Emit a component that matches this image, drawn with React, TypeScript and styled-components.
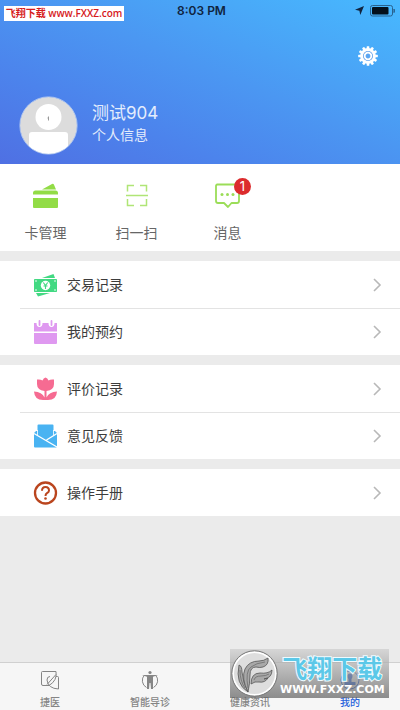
import React from 'react';
import styled, { createGlobalStyle } from 'styled-components';

const sans = '"Inter", "Noto Sans CJK SC", sans-serif';

const GlobalStyle = createGlobalStyle`
  *, *::before, *::after { box-sizing: border-box; }
  body { margin: 0; background: #ebebeb; font-family: ${sans}; }
  button { border: 0; padding: 0; background: none; font: inherit; color: inherit; cursor: pointer; }
  svg { display: block; flex: none; }
`;

const Page = styled.div`
  min-height: 100vh;
  display: flex;
  flex-direction: column;
`;

const Header = styled.header`
  height: 164px;
  display: flex;
  flex-direction: column;
  background: linear-gradient(to top right, #4f70e3 0%, #4c83ec 28%, #4b97f2 55%, #49a9f8 78%, #47b9ff 100%);
`;

const StatusBar = styled.div`
  display: grid;
  grid-template-columns: 1fr auto 1fr;
  align-items: center;
  height: 20px;
  padding: 0 5px 0 4px;
  color: #10243f;
`;

const SiteTag = styled.span`
  justify-self: start;
  width: 120px;
  height: 15px;
  margin-top: 6px;
  background: #fff;
  color: #d61a1c;
  font: 600 10px/15px "Open Sans", "Noto Sans CJK SC", sans-serif;
  text-align: center;
  white-space: nowrap;
`;

const Clock = styled.time`
  margin-left: 4px;
  font-size: 12px;
  font-weight: 600;
  line-height: 20px;
`;

const StatusIcons = styled.div`
  justify-self: end;
  display: flex;
  align-items: center;
  gap: 6px;
`;

const SettingsButton = styled.button`
  align-self: flex-end;
  margin: 25px 22px 0 0;
`;

const Profile = styled.button`
  display: flex;
  align-items: center;
  gap: 14px;
  margin: 29px 19px 0;
  text-align: left;
`;

const ProfileText = styled.span`
  display: flex;
  flex-direction: column;
  padding-bottom: 4px;
  color: #e4edfc;
`;

const Name = styled.span`
  font-size: 17px;
  line-height: 23px;
`;

const Caption = styled.span`
  font-size: 14px;
  line-height: 20px;
`;

const QuickActions = styled.nav`
  display: flex;
  height: 87px;
  background: #fff;
`;

const QuickAction = styled.button`
  width: 91px;
  display: flex;
  flex-direction: column;
  align-items: center;
  padding-top: 17px;
  gap: 12px;
  color: #666;
  font-size: 14px;
  line-height: 20px;
`;

const IconHolder = styled.span`
  position: relative;
  display: block;
`;

const Badge = styled.span`
  position: absolute;
  top: -3px;
  right: -10px;
  width: 17px;
  height: 17px;
  border-radius: 50%;
  background: #dc2b2d;
  color: #fff;
  font-size: 13px;
  line-height: 17px;
  text-align: center;
`;

const Group = styled.section`
  margin-top: 10px;
  background: #fff;
`;

const Row = styled.button`
  width: 100%;
  height: 47px;
  display: flex;
  align-items: center;
  padding: 0 18px 0 33px;
  background: linear-gradient(#e3e3e3, #e3e3e3) 20px 0 / 100% 1px no-repeat;
  color: #3c3c3c;
  font-size: 14px;
  line-height: 20px;

  &:first-child { background: none; }
`;

const RowLabel = styled.span`
  flex: 1;
  margin-left: 9px;
  text-align: left;
`;

const TabBar = styled.nav`
  position: relative;
  display: grid;
  grid-template-columns: repeat(4, 1fr);
  height: 48px;
  margin-top: auto;
  border-top: 1px solid #d0d0d0;
  background: #f6f6f6;
`;

const Tab = styled.button<{ $active?: boolean }>`
  display: flex;
  flex-direction: column;
  align-items: center;
  padding-top: 7px;
  gap: 5px;
  color: ${({ $active }) => ($active ? '#2862dc' : '#858585')};
  font-size: 10px;
  font-weight: 500;
  line-height: 14px;
`;

const Watermark = styled.aside`
  position: absolute;
  right: 11px;
  bottom: 12px;
  width: 159px;
  height: 49px;
  display: flex;
  align-items: center;
  gap: 2px;
  padding-left: 1px;
  background: linear-gradient(rgba(205, 205, 205, 0.7), rgba(95, 95, 95, 0.7));
  pointer-events: none;
`;

const WatermarkText = styled.div`
  display: flex;
  flex-direction: column;
  align-items: center;
  white-space: nowrap;
`;

const WatermarkName = styled.strong`
  color: #5cc8e8;
  font: 700 25px/32px "Noto Sans CJK SC", sans-serif;
  paint-order: stroke;
  -webkit-text-stroke: 2px #effbff;
`;

const WatermarkUrl = styled.span`
  color: #fff;
  font: 700 11px/14px "DejaVu Sans", sans-serif;
`;

const LocationIcon = () => (
  <svg width="9" height="9" viewBox="0 0 9 9" aria-hidden="true">
    <path d="M9 0 5.3 9 4.4 4.7 0 3.8Z" fill="#10243f" />
  </svg>
);

const BatteryIcon = () => (
  <svg width="25" height="12" viewBox="0 0 25 12" aria-hidden="true">
    <rect x=".5" y=".5" width="22" height="10.5" rx="2" fill="none" stroke="#28628f" />
    <rect x="2" y="2" width="16.5" height="7.5" rx="1" fill="#03101c" />
    <path d="M24 4q1 1.800 0 3.600Z" fill="#28628f" stroke="#28628f" />
  </svg>
);

const GearIcon = () => (
  <svg width="20" height="22" viewBox="-10 -11 20 22" aria-hidden="true">
    <g fill="#fff">
      {Array.from({ length: 12 }, (_, i) => (
        <rect key={i} x="-1.3" y="-9.8" width="2.6" height="4" rx=".5" transform={`rotate(${i * 30})`} />
      ))}
    </g>
    <circle r="6.2" fill="none" stroke="#fff" strokeWidth="3.4" />
    <circle r="5" fill="#6aa6ec" />
    <circle r="3.3" fill="#5ba6f2" stroke="#fff" strokeWidth="1.8" />
  </svg>
);

const Avatar = () => (
  <svg width="59" height="59" viewBox="0 0 59 59" role="img" aria-label="头像">
    <defs>
      <clipPath id="avatar"><circle cx="29.5" cy="29.5" r="28.5" /></clipPath>
    </defs>
    <circle cx="29.5" cy="29.5" r="28.5" fill="#dcdcdc" />
    <g clipPath="url(#avatar)" fill="#fff">
      <circle cx="29.5" cy="21" r="13" />
      <path d="M10 39q0-3 3-3h33q3 0 3 3v21H10Z" />
    </g>
    <path d="M29.500 20.500v4M28.500 22h1" stroke="#999" fill="none" />
    <circle cx="29.500" cy="29.500" r="28.700" fill="none" stroke="#b8cdf1" strokeWidth=".8" />
  </svg>
);

const CardIcon = () => (
  <svg width="27" height="30" viewBox="0 0 27 30" fill="#92dc46" aria-hidden="true">
    <path d="M10 8.500 20 3q1.500-.5 2 .8L24 8.500Z" />
    <path d="M1 12q0-2.500 2.500-2.500h20q2.500 0 2.500 2.500v1.500H1ZM1 17h25v9q0 1-1 1H2q-1 0-1-1Z" />
  </svg>
);

const ScanIcon = () => (
  <svg width="24" height="30" viewBox="0 0 24 30" fill="none" stroke="#b0e576" strokeWidth="1.500" aria-hidden="true">
    <path d="M9 4.500H2.500v6M15 4.500h6.500v6M1 14.500h22M2.500 18v6.500H9M21.500 18v6.500H15" />
  </svg>
);

const MessageIcon = () => (
  <svg width="27" height="30" viewBox="0 0 27 30" aria-hidden="true">
    <path d="M3 3.500h20.500q1.500 0 1.500 1.500v15q0 2-2 2h-5.500L14 26l-4-4H4q-2 0-2-2V5q0-1.500 1.500-1.500Z" fill="none" stroke="#9bdd58" strokeWidth="1.800" strokeLinejoin="round" />
    <g fill="#9bdd58"><circle cx="8" cy="13.500" r="1.500" /><circle cx="13.500" cy="13.500" r="1.500" /><circle cx="19" cy="13.500" r="1.500" /></g>
  </svg>
);

const MoneyIcon = () => (
  <svg width="25" height="24" viewBox="0 0 25 24" aria-hidden="true">
    <path d="M9 5 20.500 1l1.500 4ZM3 20h14L5 23.500Z" fill="#42d982" />
    <rect x="1" y="6" width="23" height="13" rx=".7" fill="#42d982" />
    <g fill="#fff">
      <circle cx="12.500" cy="12.500" r="4.700" />
      <circle cx="3" cy="8" r=".8" /><circle cx="22" cy="8" r=".8" /><circle cx="3" cy="17" r=".8" /><circle cx="22" cy="17" r=".8" />
    </g>
    <path d="m10.300 9.500 2.200 3 2.200-3M12.500 12.500v3.500M10.500 13h4" fill="none" stroke="#42d982" strokeWidth="1.100" />
  </svg>
);

const CalendarIcon = () => (
  <svg width="25" height="26" viewBox="0 0 25 26" aria-hidden="true">
    <path d="M1 4h2.500q0 4 3 4t3-4h6q0 4 3 4t3-4H24v8.500H1ZM1 14h23v10q0 1-1 1H2q-1 0-1-1Z" fill="#df99f0" />
    <path d="M6.500 2v4M18.500 2v4" stroke="#df99f0" strokeWidth="1.800" strokeLinecap="round" />
  </svg>
);

const TulipIcon = () => (
  <svg width="25" height="24" viewBox="0 0 25 24" fill="#f66b92" aria-hidden="true">
    <path d="M4 2.500q3.500-.5 5.500 1 1-2.500 3-3 2 .5 3 3 2-1.500 5.500-1V7q0 6-7.500 7v6.500q2.500-5.500 10.500-6-.5 8.500-9 8.500h-5q-8.500 0-9-8.500 8 .5 10.500 6V14Q4 13 4 7Z" />
  </svg>
);

const EnvelopeIcon = () => (
  <svg width="25" height="24" viewBox="0 0 25 24" aria-hidden="true">
    <path d="M5.500.500h14q1 0 1 1V7H24v15.500q0 1-1 1H2q-1 0-1-1V7h3.500V1.500q0-1 1-1Z" fill="#49b3f2" />
    <path d="M1 9.500 24 23M13.500 16 24 9.500" fill="none" stroke="#fff" strokeWidth="1.400" />
    <path d="M4.500 6v5.500M20.500 6v5.500" stroke="#fff" strokeWidth=".8" />
    <path d="M1 6v3l3-3ZM24 6v3l-3-3Z" fill="#fff" />
  </svg>
);

const HelpIcon = () => (
  <svg width="25" height="24" viewBox="0 0 25 24" fill="none" stroke="#ba451e" aria-hidden="true">
    <circle cx="12.500" cy="12" r="10.500" strokeWidth="2.300" />
    <path d="M9 9.800q0-3.800 3.500-3.800t3.500 3.500q0 1.500-2 2.700-1.500 1-1.500 2.800" strokeWidth="2" />
    <circle cx="12.500" cy="17.500" r="1.300" fill="#ba451e" stroke="none" />
  </svg>
);

const Chevron = () => (
  <svg width="10" height="14" viewBox="0 0 10 14" fill="none" stroke="#b8b8b8" strokeWidth="1.600" aria-hidden="true">
    <path d="m2 1 6 6-6 6" />
  </svg>
);

const HospitalIcon = () => (
  <svg width="20" height="20" viewBox="0 0 20 20" fill="none" stroke="currentColor" strokeWidth="1" aria-hidden="true">
    <path d="M2.500 1.500H16q1.500 9-7 14H3q-1.500 0-1.500-1.500V2.500q0-1 1-1Z" />
    <path d="M16 6.500h1.500q1 0 1 1V19Q8 18.500 7 10q0-3.500 3-3.500M7 14.500l9-10" />
  </svg>
);

const BodyIcon = () => (
  <svg width="20" height="20" viewBox="0 0 20 20" aria-hidden="true">
    <path d="M4.500 5a8 8 0 0 0 2 12.500M15.500 5a8 8 0 0 1-2 12.500" fill="none" stroke="currentColor" />
    <circle cx="10" cy="2.500" r="1.600" fill="currentColor" />
    <path d="M2 5h16l-5 1.800V19h-2l-.5-6h-1L9 19H7V6.800Z" fill="currentColor" />
  </svg>
);

const NewsIcon = () => (
  <svg width="20" height="20" viewBox="0 0 20 20" fill="none" stroke="currentColor" aria-hidden="true">
    <rect x="2.500" y="2.500" width="15" height="15" rx="1" />
    <path d="M6 7h8M6 10h8M6 13h5" />
  </svg>
);

const PersonIcon = () => (
  <svg width="20" height="20" viewBox="0 0 20 20" aria-hidden="true">
    <circle cx="10" cy="10" r="9" fill="none" stroke="currentColor" />
    <path d="M7.500 6a2.500 2.500 0 0 1 5 0q0 2-1 3v3h4v3h-11v-3h4V9q-1-1-1-3Z" fill="currentColor" />
  </svg>
);

const FxLogo = () => (
  <svg width="47" height="47" viewBox="0 0 47 47" aria-hidden="true">
    <circle cx="23.500" cy="23.500" r="21.500" fill="#dedede" stroke="#fff" strokeWidth="2" />
    <circle cx="23.500" cy="23.500" r="22.700" fill="none" stroke="#777" strokeWidth="1" />
    <g fill="#a8a8a8" stroke="#555" strokeWidth=".8" strokeLinejoin="round">
      <path d="M8 15q3 1 3 7 1 11 6 20Q4 34 8 15Z" />
      <path d="M17 42q-7-14-3-23 4-8 14-8 5 0 9-3 1 7-5 9-3 1-7 0-6 0-6 8 0 8-2 17Z" />
      <path d="M20 34q0-11 9-11 8 1 12-3 0 8-8 9l4-1q-3 5-9 4-4-1-8 2Z" />
    </g>
    <path d="M17 38q-3-17 3-21 5-4 14-5M23 30q1-4 7-4 5 0 8-2M9 20q0 11 5 18" fill="none" stroke="#666" strokeWidth=".7" />
  </svg>
);

const groups = [
  [
    { label: '交易记录', Icon: MoneyIcon },
    { label: '我的预约', Icon: CalendarIcon },
  ],
  [
    { label: '评价记录', Icon: TulipIcon },
    { label: '意见反馈', Icon: EnvelopeIcon },
  ],
  [{ label: '操作手册', Icon: HelpIcon }],
];

const actions = [
  { label: '卡管理', Icon: CardIcon },
  { label: '扫一扫', Icon: ScanIcon },
  { label: '消息', Icon: MessageIcon, count: 1 },
];

const tabs = [
  { label: '捷医', Icon: HospitalIcon },
  { label: '智能导诊', Icon: BodyIcon },
  { label: '健康资讯', Icon: NewsIcon },
  { label: '我的', Icon: PersonIcon, active: true },
];

export default function App() {
  return (
    <Page>
      <GlobalStyle />
      <Header>
        <StatusBar>
          <SiteTag>飞翔下载 www.FXXZ.com</SiteTag>
          <Clock>8:03 PM</Clock>
          <StatusIcons><LocationIcon /><BatteryIcon /></StatusIcons>
        </StatusBar>
        <SettingsButton aria-label="设置"><GearIcon /></SettingsButton>
        <Profile>
          <Avatar />
          <ProfileText>
            <Name>测试904</Name>
            <Caption>个人信息</Caption>
          </ProfileText>
        </Profile>
      </Header>
      <QuickActions>
        {actions.map(({ label, Icon, count }) => (
          <QuickAction key={label}>
            <IconHolder><Icon />{count && <Badge>{count}</Badge>}</IconHolder>
            {label}
          </QuickAction>
        ))}
      </QuickActions>
      <main>
        {groups.map((rows) => (
          <Group key={rows[0].label}>
            {rows.map(({ label, Icon }) => (
              <Row key={label}><Icon /><RowLabel>{label}</RowLabel><Chevron /></Row>
            ))}
          </Group>
        ))}
      </main>
      <TabBar>
        {tabs.map(({ label, Icon, active }) => (
          <Tab key={label} $active={active}><Icon />{label}</Tab>
        ))}
        <Watermark>
          <FxLogo />
          <WatermarkText>
            <WatermarkName>飞翔下载</WatermarkName>
            <WatermarkUrl>WWW.FXXZ.COM</WatermarkUrl>
          </WatermarkText>
        </Watermark>
      </TabBar>
    </Page>
  );
}
